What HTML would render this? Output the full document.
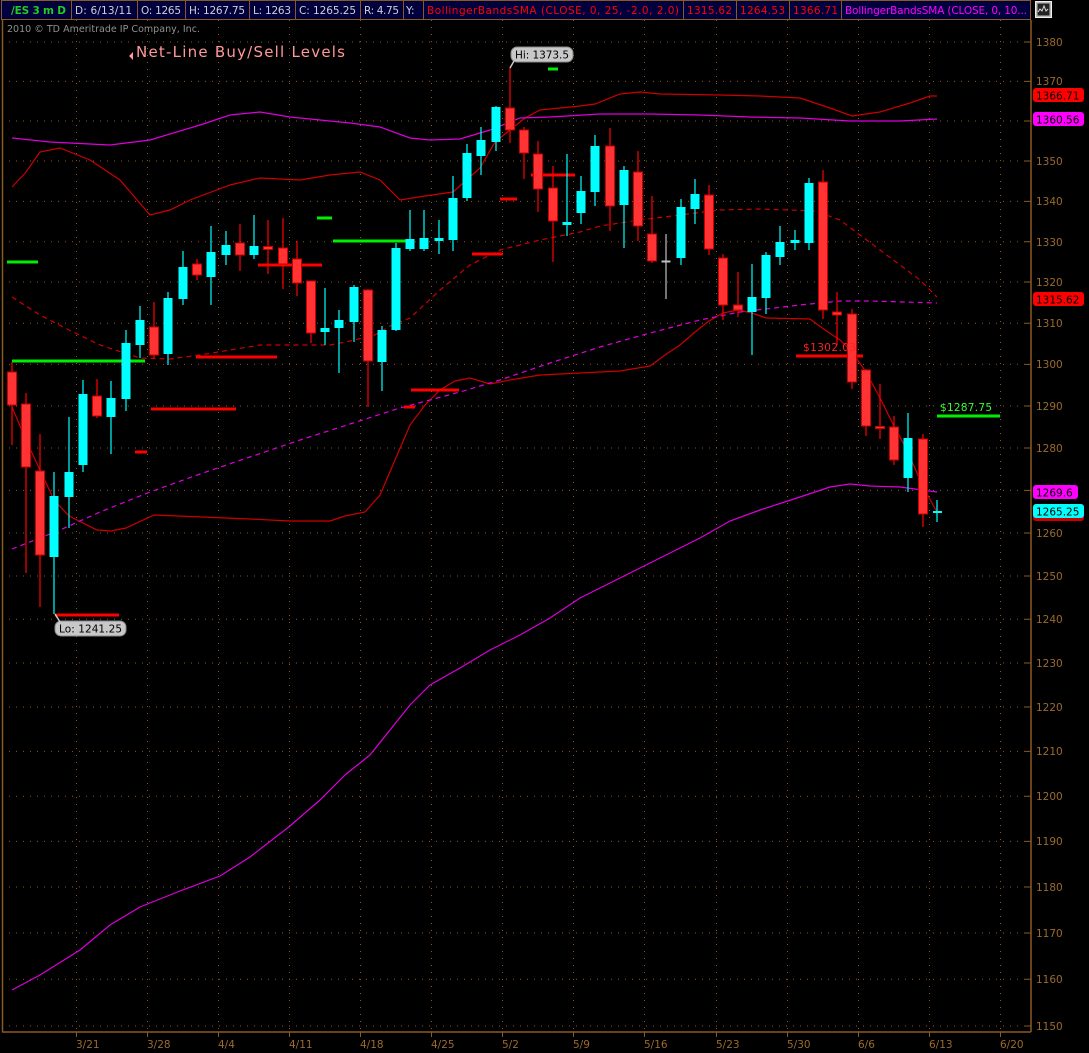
<!DOCTYPE html>
<html><head><meta charset="utf-8"><style>
html,body{margin:0;padding:0;background:#000;width:1089px;height:1053px;overflow:hidden}
svg{display:block}
text{font-family:"DejaVu Sans","Liberation Sans",sans-serif}
</style></head><body>
<svg width="1089" height="1053" viewBox="0 0 1089 1053" xmlns="http://www.w3.org/2000/svg">
<rect width="1089" height="1053" fill="#000"/>
<g font-size="10.5">
<rect x="0" y="0" width="1031" height="20" fill="#00003e"/>
<g stroke="#8a5a20" stroke-width="1" fill="none">
<rect x="1.5" y="0.5" width="1029" height="19"/>
<line x1="71.5" y1="0" x2="71.5" y2="20"/><line x1="137.5" y1="0" x2="137.5" y2="20"/>
<line x1="185.5" y1="0" x2="185.5" y2="20"/><line x1="249.5" y1="0" x2="249.5" y2="20"/>
<line x1="295.5" y1="0" x2="295.5" y2="20"/><line x1="360.5" y1="0" x2="360.5" y2="20"/>
<line x1="403.5" y1="0" x2="403.5" y2="20"/><line x1="423.5" y1="0" x2="423.5" y2="20"/>
<line x1="683.5" y1="0" x2="683.5" y2="20"/><line x1="736.5" y1="0" x2="736.5" y2="20"/>
<line x1="789.5" y1="0" x2="789.5" y2="20"/><line x1="841.5" y1="0" x2="841.5" y2="20"/>
</g>
<text x="11" y="14" fill="#22cc22" font-weight="bold" textLength="55">/ES 3 m D</text>
<text x="75" y="14" fill="#d0d0d0" textLength="57">D: 6/13/11</text>
<text x="141" y="14" fill="#d0d0d0" textLength="40">O: 1265</text>
<text x="189" y="14" fill="#d0d0d0" textLength="56">H: 1267.75</text>
<text x="253" y="14" fill="#d0d0d0" textLength="38">L: 1263</text>
<text x="299" y="14" fill="#d0d0d0" textLength="57">C: 1265.25</text>
<text x="364" y="14" fill="#d0d0d0" textLength="35">R: 4.75</text>
<text x="406" y="14" fill="#d0d0d0">Y:</text>
<text x="427" y="14" fill="#ff0000" textLength="252">BollingerBandsSMA (CLOSE, 0, 25, -2.0, 2.0)</text>
<text x="687" y="14" fill="#ff0000" textLength="45">1315.62</text>
<text x="740" y="14" fill="#ff0000" textLength="45">1264.53</text>
<text x="793" y="14" fill="#ff0000" textLength="45">1366.71</text>
<text x="845" y="14" fill="#ff00ff" textLength="182">BollingerBandsSMA (CLOSE, 0, 10...</text>
<rect x="1035.5" y="1.5" width="16" height="16" fill="#bbb" stroke="#eee"/>
<rect x="1037.5" y="3.5" width="12" height="12" fill="#222"/>
<polyline points="1038,12 1040,9 1042,11 1044,6 1046,11 1048,9" fill="none" stroke="#ddd" stroke-width="1"/>
</g>
<text x="7" y="32" fill="#909090" font-size="9.5" textLength="193">2010 © TD Ameritrade IP Company, Inc.</text>
<g stroke="#8a5a20" stroke-width="1.5">
<line x1="2.5" y1="20" x2="2.5" y2="1032"/>
<line x1="1031" y1="20" x2="1031" y2="1032"/>
<line x1="2" y1="1032" x2="1031" y2="1032"/>
</g>
<g stroke="#8a5a20" stroke-width="1" stroke-dasharray="1,6" fill="none">
<path d="M2 42H1026M2 81.4H1026M2 121H1026M2 161H1026M2 201.4H1026M2 241.8H1026M2 282H1026M2 323.3H1026M2 364.4H1026M2 406H1026M2 448H1026M2 490.4H1026M2 533H1026M2 576H1026M2 619.2H1026M2 663H1026M2 707H1026M2 751.4H1026M2 796.2H1026M2 841.4H1026M2 887H1026M2 933H1026M2 979.3H1026M2 1026H1026"/>
<path d="M76.5 20V1032M147.5 20V1032M218.5 20V1032M289.5 20V1032M360.5 20V1032M431.5 20V1032M502.5 20V1032M573.5 20V1032M644.5 20V1032M716.5 20V1032M787.5 20V1032M858.5 20V1032M929.5 20V1032M1000.5 20V1032"/>
</g>
<g stroke="#8a5a20" stroke-width="1">
<path d="M1025 42H1031M1025 81.4H1031M1025 121H1031M1025 161H1031M1025 201.4H1031M1025 241.8H1031M1025 282H1031M1025 323.3H1031M1025 364.4H1031M1025 406H1031M1025 448H1031M1025 490.4H1031M1025 533H1031M1025 576H1031M1025 619.2H1031M1025 663H1031M1025 707H1031M1025 751.4H1031M1025 796.2H1031M1025 841.4H1031M1025 887H1031M1025 933H1031M1025 979.3H1031M1025 1026H1031"/>
<path d="M76.5 1032V1037M147.5 1032V1037M218.5 1032V1037M289.5 1032V1037M360.5 1032V1037M431.5 1032V1037M502.5 1032V1037M573.5 1032V1037M644.5 1032V1037M716.5 1032V1037M787.5 1032V1037M858.5 1032V1037M929.5 1032V1037M1000.5 1032V1037"/>
</g>
<g fill="#9a6a30" font-size="10.5">
<text x="1036" y="46">1380</text><text x="1036" y="85">1370</text>
<text x="1036" y="165">1350</text><text x="1036" y="205">1340</text><text x="1036" y="246">1330</text>
<text x="1036" y="286">1320</text><text x="1036" y="327">1310</text><text x="1036" y="368">1300</text>
<text x="1036" y="410">1290</text><text x="1036" y="452">1280</text>
<text x="1036" y="537">1260</text><text x="1036" y="580">1250</text><text x="1036" y="623">1240</text>
<text x="1036" y="667">1230</text><text x="1036" y="711">1220</text><text x="1036" y="755">1210</text>
<text x="1036" y="800">1200</text><text x="1036" y="845">1190</text><text x="1036" y="891">1180</text>
<text x="1036" y="937">1170</text><text x="1036" y="983">1160</text><text x="1036" y="1030">1150</text>
<text x="76" y="1048">3/21</text><text x="147" y="1048">3/28</text><text x="218" y="1048">4/4</text>
<text x="289" y="1048">4/11</text><text x="360" y="1048">4/18</text><text x="431" y="1048">4/25</text>
<text x="502" y="1048">5/2</text><text x="573" y="1048">5/9</text><text x="644" y="1048">5/16</text>
<text x="716" y="1048">5/23</text><text x="787" y="1048">5/30</text><text x="858" y="1048">6/6</text>
<text x="929" y="1048">6/13</text><text x="1000" y="1048">6/20</text>
</g>
<g font-size="10.5">
<rect x="1033" y="88" width="51" height="14" rx="3" fill="#ff0000"/><text x="1036" y="99.5" fill="#000">1366.71</text>
<rect x="1033" y="112" width="51" height="14" rx="3" fill="#ff00ff"/><text x="1036" y="123.5" fill="#000">1360.56</text>
<rect x="1033" y="292" width="51" height="14" rx="3" fill="#ff0000"/><text x="1036" y="303.5" fill="#000">1315.62</text>
<rect x="1033" y="485" width="45" height="14" rx="3" fill="#ff00ff"/><text x="1036" y="496.5" fill="#000">1269.6</text>
<rect x="1033" y="506" width="51" height="15" rx="3" fill="#cc0000"/>
<rect x="1033" y="504" width="51" height="14" rx="3" fill="#00ffff"/><text x="1036" y="515.5" fill="#000">1265.25</text>
</g>
<g fill="none" stroke-width="1.2">
<polyline stroke="#cc0000" points="12,187 26,172 40,152 60,148 90,160 120,180 150,215 170,210 190,200 230,185 260,178 300,180 330,175 360,172 380,180 400,200 425,196 453,192 480,168 495,142 525,118 540,110 560,108 580,106 595,104 620,94 640,92 660,94 720,95 760,96 800,98 830,108 852,116 880,112 910,103 930,96 937,96"/>
<polyline stroke="#cc0000" points="12,407 26,440 40,470 54,500 69,516 97,530 111,531 126,528 154,515 250,519 290,521 330,521 345,516 365,512 380,495 395,460 410,425 425,405 440,390 455,381 470,378 490,384 510,380 540,375 580,373 620,371 650,366 665,355 680,345 695,332 709,321 723,313 738,310 752,313 766,318 810,319 825,330 840,340 852,352 866,372 880,398 894,426 908,452 923,487 937,512"/>
<polyline stroke="#cc0000" stroke-dasharray="5,4" points="12,297 40,315 69,330 100,345 140,358 170,359 200,355 260,345 330,345 350,341 375,335 390,326 410,318 440,290 470,265 500,250 540,240 580,232 600,226 640,220 680,215 720,210 760,209 815,211 840,220 860,235 880,250 900,265 920,280 937,297"/>
<polyline stroke="#dd00dd" points="12,138 50,142 110,145 150,140 200,125 230,115 260,112 290,117 350,123 380,127 410,138 430,140 460,139 490,130 520,118 550,117 600,114 650,114 700,115 750,117 800,118 850,121 900,121 937,119"/>
<polyline stroke="#dd00dd" points="12,990 40,975 80,950 110,925 140,907 180,891 220,876 250,857 290,826 320,800 345,775 370,755 390,730 410,705 430,685 460,668 490,650 520,635 550,618 580,598 620,578 660,558 700,538 730,521 760,510 800,497 830,487 850,484 870,486 900,487 937,492"/>
<polyline stroke="#dd00dd" stroke-dasharray="5,4" points="12,549 60,530 100,512 150,492 200,474 250,457 300,440 350,424 400,408 430,400 460,392 500,380 550,363 600,347 650,333 700,320 740,312 800,305 840,301 870,301 937,303"/>
</g>
<g stroke-width="3">
<path stroke="#00ee00" d="M12 361H145M7 262H38M317 218H332M333 241H414M548 69H558M937 416H1000"/>
<path stroke="#ff0000" d="M55 615H119M151 409H236M196 357H277M258 265H322M135 452H147M404 407H415M411 390H459M472 254H503M500 199H517M531 175H575M796 356H863M8 382H12"/>
</g>
<g stroke-width="1.2">
<g stroke="#ff0000">
<path d="M12 362V445M26 393V573M40 434V607M97 379V418M154 302V358M197 259V280M240 224V271M268 220V274M283 218V289M297 241V296M311 281V343M368 289V407M510 68V143M524 127V179M538 141V212M553 166V262M610 128V231M638 151V241M652 196V263M709 185V255M723 254V320M738 272V317M823 170V319M837 292V345M852 309V389M866 369V436M880 384V439M894 416V465M923 434V527"/>
</g>
<g stroke="#00ffff">
<path d="M54 472V614M69 417V528M83 380V472M111 381V454M126 330V411M140 306V358M168 292V365M183 251V305M211 226V305M226 231V265M254 215V259M325 288V345M339 310V373M354 285V342M382 326V391M396 243V331M410 210V251M424 210V251M439 220V254M453 176V251M467 144V201M481 127V175M496 106V151M567 154V236M581 176V224M595 135V206M624 166V248M681 199V265M695 179V224M752 264V355M766 252V314M780 226V265M795 230V250M809 178V250M908 413V492M937 500V522"/>
</g>
<path stroke="#c0c0c0" d="M666 234V299"/>
<g fill="#ff3333" stroke="#cc0000" stroke-width="1">
<rect x="7.5" y="372" width="9" height="33"/><rect x="21.5" y="404" width="9" height="63"/><rect x="35.5" y="471" width="9" height="84"/>
<rect x="92.5" y="396" width="9" height="20"/><rect x="149.5" y="327" width="9" height="28"/><rect x="192.5" y="264" width="9" height="11"/>
<rect x="235.5" y="243" width="9" height="12"/><rect x="263.5" y="246.5" width="9" height="3"/><rect x="278.5" y="248" width="9" height="16"/>
<rect x="292.5" y="259" width="9" height="24"/><rect x="306.5" y="281" width="9" height="52"/><rect x="363.5" y="290" width="9" height="71"/>
<rect x="505.5" y="108" width="9" height="22"/><rect x="519.5" y="130" width="9" height="23"/><rect x="533.5" y="154" width="9" height="35"/>
<rect x="548.5" y="188" width="9" height="33"/><rect x="605.5" y="146" width="9" height="60"/><rect x="633.5" y="172" width="9" height="54"/>
<rect x="647.5" y="234" width="9" height="27"/><rect x="704.5" y="195" width="9" height="54"/><rect x="718.5" y="258" width="9" height="47"/>
<rect x="733.5" y="305" width="9" height="5"/><rect x="818.5" y="182" width="9" height="128"/><rect x="832.5" y="312" width="9" height="3"/>
<rect x="847.5" y="314" width="9" height="68"/><rect x="861.5" y="370" width="9" height="56"/><rect x="875.5" y="426.5" width="9" height="2"/>
<rect x="889.5" y="427" width="9" height="33"/><rect x="918.5" y="439" width="9" height="75"/>
</g>
<g fill="#00ffff">
<rect x="49.5" y="496" width="9" height="61"/><rect x="64.5" y="472" width="9" height="25"/><rect x="78.5" y="394" width="9" height="71"/>
<rect x="106.5" y="398" width="9" height="19"/><rect x="121.5" y="343" width="9" height="56"/><rect x="135.5" y="320" width="9" height="25"/>
<rect x="163.5" y="298" width="9" height="56"/><rect x="178.5" y="267" width="9" height="32"/><rect x="206.5" y="252" width="9" height="25"/>
<rect x="221.5" y="245" width="9" height="10"/><rect x="249.5" y="246" width="9" height="9"/><rect x="320.5" y="328" width="9" height="4"/>
<rect x="334.5" y="320" width="9" height="8"/><rect x="349.5" y="287" width="9" height="35"/><rect x="377.5" y="330" width="9" height="32"/>
<rect x="391.5" y="248" width="9" height="82"/><rect x="405.5" y="239" width="9" height="10"/><rect x="419.5" y="238" width="9" height="11"/>
<rect x="434.5" y="238" width="9" height="3"/><rect x="448.5" y="198" width="9" height="42"/><rect x="462.5" y="153" width="9" height="45"/>
<rect x="476.5" y="140" width="9" height="16"/><rect x="491.5" y="107" width="9" height="35"/><rect x="562.5" y="222" width="9" height="3"/>
<rect x="576.5" y="191" width="9" height="22"/><rect x="590.5" y="146" width="9" height="46"/><rect x="619.5" y="170" width="9" height="35"/>
<rect x="676.5" y="207" width="9" height="51"/><rect x="690.5" y="194" width="9" height="15"/><rect x="747.5" y="297" width="9" height="15"/>
<rect x="761.5" y="255" width="9" height="43"/><rect x="775.5" y="242" width="9" height="15"/><rect x="790.5" y="240" width="9" height="3"/>
<rect x="804.5" y="183" width="9" height="60"/><rect x="903.5" y="438" width="9" height="40"/><rect x="933" y="511" width="9" height="2"/>
</g>
<rect x="661.5" y="260.5" width="9" height="2" fill="#c0c0c0"/>
</g>
<text x="136" y="57" fill="#ff9999" font-size="15" textLength="209">Net-Line Buy/Sell Levels</text>
<polygon points="133,52 129,56 133,60" fill="#ff9999"/>
<rect x="511" y="47" width="62" height="15" rx="6" fill="#c8c8c8" stroke="#888"/>
<path d="M514 61 L510 68" stroke="#c8c8c8" stroke-width="1.5"/>
<text x="515" y="58.5" fill="#000" font-size="10.5" textLength="54">Hi: 1373.5</text>
<rect x="55" y="621" width="71" height="15" rx="6" fill="#c8c8c8" stroke="#888"/>
<path d="M55 614 L60 622" stroke="#c8c8c8" stroke-width="1.5"/>
<text x="59" y="632.5" fill="#000" font-size="10.5" textLength="63">Lo: 1241.25</text>
<text x="803" y="351" fill="#ff2020" font-size="10.5" textLength="53">$1302.03</text>
<text x="940" y="411" fill="#33ff33" font-size="10.5" textLength="52">$1287.75</text>
</svg>
</body></html>
